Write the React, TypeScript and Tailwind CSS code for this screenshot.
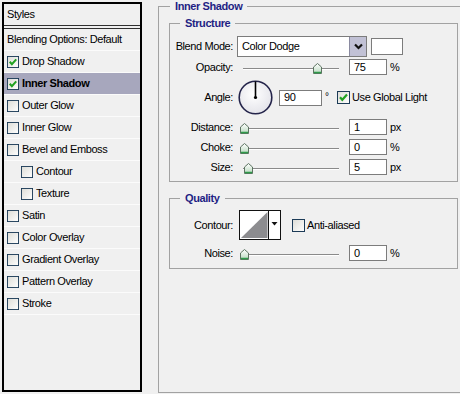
import React from 'react';

const layers = [
  { label: 'Drop Shadow', checked: true },
  { label: 'Inner Shadow', checked: true, active: true },
  { label: 'Outer Glow' },
  { label: 'Inner Glow' },
  { label: 'Bevel and Emboss' },
  { label: 'Contour', indent: true },
  { label: 'Texture', indent: true },
  { label: 'Satin' },
  { label: 'Color Overlay' },
  { label: 'Gradient Overlay' },
  { label: 'Pattern Overlay' },
  { label: 'Stroke' },
];

const Check = ({ checked = false, size = 12 }: { checked?: boolean; size?: number }) => (
  <svg width={size} height={size} viewBox="0 0 13 13" className="shrink-0">
    <defs>
      <linearGradient id="cbg" x1="0" y1="0" x2="1" y2="1">
        <stop offset="0" stopColor="#dcdcd6" />
        <stop offset="1" stopColor="#ffffff" />
      </linearGradient>
    </defs>
    <rect x="0.5" y="0.5" width="12" height="12" fill="url(#cbg)" stroke="#1c3b57" />
    {checked && (
      <path d="M3 6.2 L5.3 8.8 L10 3.6" fill="none" stroke="#21a121" strokeWidth="2.2" />
    )}
  </svg>
);

const Thumb = () => (
  <svg width="9" height="11" viewBox="0 0 9 11">
    <defs>
      <linearGradient id="thb" x1="0" y1="0" x2="0" y2="1">
        <stop offset="0" stopColor="#ffffff" />
        <stop offset="1" stopColor="#b9d8be" />
      </linearGradient>
    </defs>
    <path d="M4.5 0.5 L8.5 4 L8.5 10.5 L0.5 10.5 L0.5 4 Z" fill="url(#thb)" stroke="#5d7462" />
    <path d="M1 9.5 L8 9.5" stroke="#2f9a4a" strokeWidth="1.5" />
  </svg>
);

// pos = thumb centre in px from the slider's left end
const Slider = ({ pos }: { pos: number }) => (
  <div className="relative w-[96px] h-[15px] shrink-0">
    <div className="absolute left-0 right-0 top-[8px] h-[2px] border-t border-[#8a8a8a] border-b border-b-white" />
    <div className="absolute top-[3px]" style={{ left: pos - 4.5 }}>
      <Thumb />
    </div>
  </div>
);

const Field = ({ value, w = 38 }: { value: string; w?: number }) => (
  <div
    className="h-[16px] bg-white border border-[#7c7c7c] pl-[4px] flex items-center shrink-0"
    style={{ width: w }}
  >
    {value}
  </div>
);

const Label = ({ children }: { children: React.ReactNode }) => (
  <div className="w-[63px] text-right shrink-0">{children}</div>
);

const SliderRow = ({ label, pos, value, unit, mt }: { label: string; pos: number; value: string; unit: string; mt: string }) => (
  <div className={`flex items-center h-[16px] ${mt}`}>
    <Label>{label}</Label>
    <div className="ml-[10px]">
      <Slider pos={pos} />
    </div>
    <div className="ml-[10px]">
      <Field value={value} />
    </div>
    <span className="ml-[3px]">{unit}</span>
  </div>
);

export default function App() {
  return (
    <div className="w-[460px] h-[394px] bg-[#f0f0f0] flex overflow-hidden font-['Liberation_Sans',Arial,sans-serif] text-[11px] tracking-[-0.4px] text-black leading-[13px]">
      {/* Styles list */}
      <div className="ml-[2px] mt-[2px] w-[140px] h-[390px] shrink-0 border-2 border-black flex flex-col">
        <div className="h-[21px] flex items-center pl-[3px]">Styles</div>
        <div className="h-[4px] border-y border-[#303030]" />
        <div className="h-[22px] border-b border-[#fbfbfb] flex items-center pl-[3px]">
          Blending Options: Default
        </div>
        {layers.map((l) => (
          <div
            key={l.label}
            className={`h-[22px] border-b border-[#fbfbfb] flex items-center ${l.indent ? 'pl-[17px]' : 'pl-[3px]'} ${l.active ? 'bg-[#a7a7bd] font-bold' : ''}`}
          >
            <Check checked={l.checked} />
            <span className="ml-[3px]">{l.label}</span>
          </div>
        ))}
      </div>

      {/* Inner Shadow settings */}
      <fieldset className="ml-[16px] w-[310px] h-[393px] shrink-0 border border-[#a2a2a2]">
        <legend className="ml-[11px] px-[5px] font-bold text-[#1f1f84] leading-[13px]">Inner Shadow</legend>

        <fieldset className="ml-[10px] mt-[4px] w-[289px] h-[165px] border border-[#a2a2a2]">
          <legend className="ml-[10px] px-[5px] font-bold text-[#1f1f84] leading-[13px]">Structure</legend>

          <div className="flex items-center h-[21px] mt-[6px]">
            <Label>Blend Mode:</Label>
            <div className="ml-[4px] w-[130px] h-[21px] bg-white border border-[#7c7c7c] flex">
              <div className="flex-1 flex items-center pl-[4px]">Color Dodge</div>
              <div className="w-[17px] bg-[#c1c1d5] border-l border-[#8a8aa0] flex items-center justify-center">
                <svg width="9" height="7" viewBox="0 0 9 7">
                  <path d="M1 1.5 L4.5 5 L8 1.5" fill="none" stroke="#111" strokeWidth="2.2" />
                </svg>
              </div>
            </div>
            <div className="ml-[4px] w-[32px] h-[17px] bg-white border border-[#7c7c7c]" />
          </div>

          <SliderRow label="Opacity:" pos={74} value="75" unit="%" mt="mt-[2px]" />

          <div className="flex items-center h-[35px] mt-[5px]">
            <Label>Angle:</Label>
            <svg width="35" height="35" viewBox="0 0 35 35" className="ml-[5px] shrink-0">
              <defs>
                <radialGradient id="dial" cx="0.45" cy="0.4" r="0.6">
                  <stop offset="0" stopColor="#ffffff" />
                  <stop offset="1" stopColor="#e4e4ea" />
                </radialGradient>
              </defs>
              <circle cx="17.5" cy="17.5" r="16.3" fill="url(#dial)" stroke="#24244a" strokeWidth="1.6" />
              <line x1="17.5" y1="17.5" x2="17.5" y2="1.5" stroke="#000" strokeWidth="1.6" />
              <circle cx="17.5" cy="17.5" r="1.6" fill="#000" />
            </svg>
            <div className="ml-[6px]">
              <Field value="90" w={43} />
            </div>
            <div className="w-[15px] self-start mt-[10px] pl-[3px] shrink-0 text-[10px]">°</div>
            <Check checked size={13} />
            <span className="ml-[2px]">Use Global Light</span>
          </div>

          <SliderRow label="Distance:" pos={1} value="1" unit="px" mt="mt-[4px]" />
          <SliderRow label="Choke:" pos={1} value="0" unit="%" mt="mt-[4px]" />
          <SliderRow label="Size:" pos={5} value="5" unit="px" mt="mt-[4px]" />
        </fieldset>

        <fieldset className="ml-[10px] mt-[10px] w-[289px] h-[77px] border border-[#a2a2a2]">
          <legend className="ml-[10px] px-[5px] font-bold text-[#1f1f84] leading-[13px]">Quality</legend>

          <div className="flex items-center h-[30px] mt-[5px]">
            <Label>Contour:</Label>
            <svg width="42" height="30" viewBox="0 0 42 30" className="ml-[6px] shrink-0">
              <rect x="0.5" y="0.5" width="41" height="29" fill="#fff" stroke="#111" />
              <path d="M2 28 L28.5 2 L28.5 28 Z" fill="#8c8c8f" />
              <line x1="29.5" y1="1" x2="29.5" y2="29" stroke="#111" />
              <path d="M32.5 12 L38.5 12 L35.5 15.5 Z" fill="#111" />
            </svg>
            <div className="ml-[11px]">
              <Check size={13} />
            </div>
            <span className="ml-[2px]">Anti-aliased</span>
          </div>

          <SliderRow label="Noise:" pos={1} value="0" unit="%" mt="mt-[5px]" />
        </fieldset>
      </fieldset>
    </div>
  );
}
